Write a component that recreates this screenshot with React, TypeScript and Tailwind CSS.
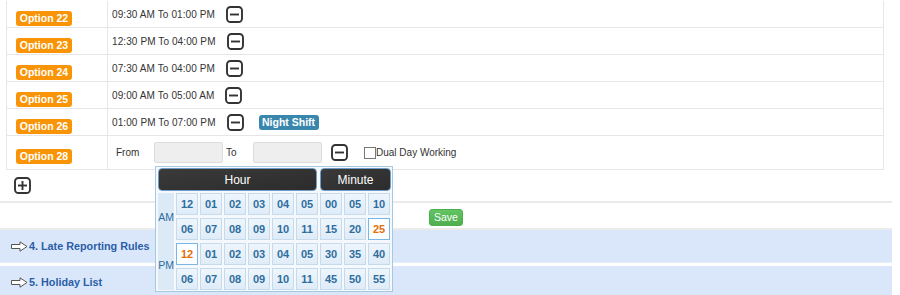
import React from "react";

function BoxIcon({ plus }: { plus?: boolean }) {
  return (
    <svg width="17" height="17" viewBox="0 0 17 17" className="block shrink-0">
      <rect x="1" y="1" width="15" height="15" rx="3.5" fill="#fff" stroke="#333" strokeWidth="1.9" />
      <rect x="4" y="7.55" width="9" height="1.9" fill="#333" />
      {plus && <rect x="7.55" y="4" width="1.9" height="9" fill="#333" />}
    </svg>
  );
}

function Arrow() {
  return (
    <svg width="17" height="11" viewBox="0 0 17 11" className="block shrink-0">
      <path d="M0.5 3.5 H9 V0.8 L16 5.5 L9 10.2 V7.5 H0.5 Z" fill="#fff" stroke="#555" strokeWidth="1" strokeLinejoin="miter" />
    </svg>
  );
}

function Badge({ children }: { children: React.ReactNode }) {
  return (
    <span className="inline-flex h-[15px] w-[56px] items-center justify-center rounded-[3px] bg-[#f89406] text-[10.5px] font-bold leading-none text-white">
      {children}
    </span>
  );
}

const rows = [
  { opt: "Option 22", from: "09:30 AM", to: "01:00 PM" },
  { opt: "Option 23", from: "12:30 PM", to: "04:00 PM" },
  { opt: "Option 24", from: "07:30 AM", to: "04:00 PM" },
  { opt: "Option 25", from: "09:00 AM", to: "05:00 AM" },
  { opt: "Option 26", from: "01:00 PM", to: "07:00 PM", night: true },
];

const hours = [
  ["12", "01", "02", "03", "04", "05"],
  ["06", "07", "08", "09", "10", "11"],
  ["12", "01", "02", "03", "04", "05"],
  ["06", "07", "08", "09", "10", "11"],
];
const minutes = [
  ["00", "05", "10"],
  ["15", "20", "25"],
  ["30", "35", "40"],
  ["45", "50", "55"],
];

function Cell({ v, sel }: { v: string; sel?: boolean }) {
  return (
    <div
      className={
        sel
          ? "flex h-[22px] w-[22px] items-center justify-center border border-[#79b7e7] bg-[#fdfeff] text-[11px] font-bold text-[#e17009]"
          : "flex h-[22px] w-[22px] items-center justify-center border border-[#c5dbec] bg-gradient-to-b from-[#eef5fc] to-[#dfecf8] text-[11px] font-bold text-[#2e6e9e]"
      }
    >
      {v}
    </div>
  );
}

export default function App() {
  return (
    <div className="relative h-[295px] w-[900px] overflow-hidden bg-white font-['Liberation_Sans',Arial,sans-serif] text-[#333]">
      <div className="w-[892px]">
        <div className="pt-[1px]">
          <div className="ml-[6px] w-[878px] border-l border-r border-[#e6e6e6]">
            {rows.map((r) => (
              <div key={r.opt} className="flex h-[27px] border-b border-[#e6e6e6]">
                <div className="w-[101px] border-r border-[#e6e6e6] pl-[9px] pt-[4px]">
                  <Badge>{r.opt}</Badge>
                </div>
                <div className="flex flex-1 items-center pl-[4px] text-[10px]">
                  <span className="tracking-[0.1px]">
                    {r.from} To {r.to}
                  </span>
                  <span className="ml-[11px]">
                    <BoxIcon />
                  </span>
                  {r.night && (
                    <span className="ml-[15px] inline-flex h-[15px] w-[60px] items-center justify-center rounded-[3px] bg-[#3a87ad] text-[10.5px] font-bold leading-none text-white">
                      Night Shift
                    </span>
                  )}
                </div>
              </div>
            ))}
            <div className="flex h-[34px] border-b border-[#e6e6e6]">
              <div className="w-[101px] border-r border-[#e6e6e6] pl-[9px] pt-[7px]">
                <Badge>Option 28</Badge>
              </div>
              <div className="flex flex-1 items-center pl-[8px] text-[10px]">
                <span className="w-[38px]">From</span>
                <div className="h-[21px] w-[69px] rounded-[2px] border border-[#dcdcdc] bg-[#eeeeee]" />
                <span className="w-[30px] pl-[3px]">To</span>
                <div className="h-[21px] w-[69px] rounded-[2px] border border-[#dcdcdc] bg-[#eeeeee]" />
                <span className="ml-[9px]">
                  <BoxIcon />
                </span>
                <span className="ml-[16px] h-[12px] w-[12px] border border-[#777] bg-white" />
                <span className="text-[10px]">Dual Day Working</span>
              </div>
            </div>
          </div>
        </div>

        <div className="border-b-2 border-[#ebebeb] pb-[7px] pl-[14px] pt-[7px]">
          <BoxIcon plus />
        </div>

        <div className="flex h-[27px] justify-center border-b-2 border-[#ebebeb] pt-[6px]">
          <button className="h-[17px] w-[34px] rounded-[3px] border border-[#4cae4c] bg-gradient-to-b from-[#62c462] to-[#4fae4f] text-[10.5px] leading-none text-white">
            Save
          </button>
        </div>

        <div className="flex h-[33px] items-center border-b border-[#e6eefa] bg-[#dae7fb] pl-[11px]">
          <Arrow />
          <span className="ml-[1px] text-[10.8px] font-bold text-[#2b5ea6]">4. Late Reporting Rules</span>
        </div>
        <div className="mt-[3px] flex h-[33px] items-center bg-[#dae7fb] pl-[11px]">
          <Arrow />
          <span className="ml-[1px] text-[10.8px] font-bold text-[#2b5ea6]">5. Holiday List</span>
        </div>
      </div>

      <div className="absolute left-[155px] top-[166px] h-[126px] w-[238px] border border-[#a6c9e2] bg-[#f5f9fd] pl-[2px] pt-[1px]">
        <div className="flex gap-[3px]">
          <div className="flex h-[23px] w-[159px] items-center justify-center rounded-[4px] border border-[#6e9cc8] bg-gradient-to-br from-[#3a3a3a] to-[#2c2c2c] text-[12px] text-white">
            Hour
          </div>
          <div className="flex h-[23px] w-[71px] items-center justify-center rounded-[4px] border border-[#6e9cc8] bg-gradient-to-br from-[#3a3a3a] to-[#2c2c2c] text-[12px] text-white">
            Minute
          </div>
        </div>
        <div className="mt-[2px] flex">
          <div className="flex h-[97px] w-[16px] flex-col bg-[#dce9f7] text-[10.5px] text-[#2e6e9e]">
            <div className="flex h-[49px] items-center justify-center">AM</div>
            <div className="flex flex-1 items-center justify-center">PM</div>
          </div>
          <div className="ml-[2px] grid grid-cols-[repeat(6,22px)] gap-x-[2px] gap-y-[3px]">
            {hours.map((row, ri) =>
              row.map((v, ci) => <Cell key={`h${ri}-${ci}`} v={v} sel={ri === 2 && ci === 0} />)
            )}
          </div>
          <div className="ml-[2px] grid grid-cols-[repeat(3,22px)] gap-x-[2px] gap-y-[3px]">
            {minutes.map((row, ri) =>
              row.map((v, ci) => <Cell key={`m${ri}-${ci}`} v={v} sel={ri === 1 && ci === 2} />)
            )}
          </div>
        </div>
      </div>
    </div>
  );
}
